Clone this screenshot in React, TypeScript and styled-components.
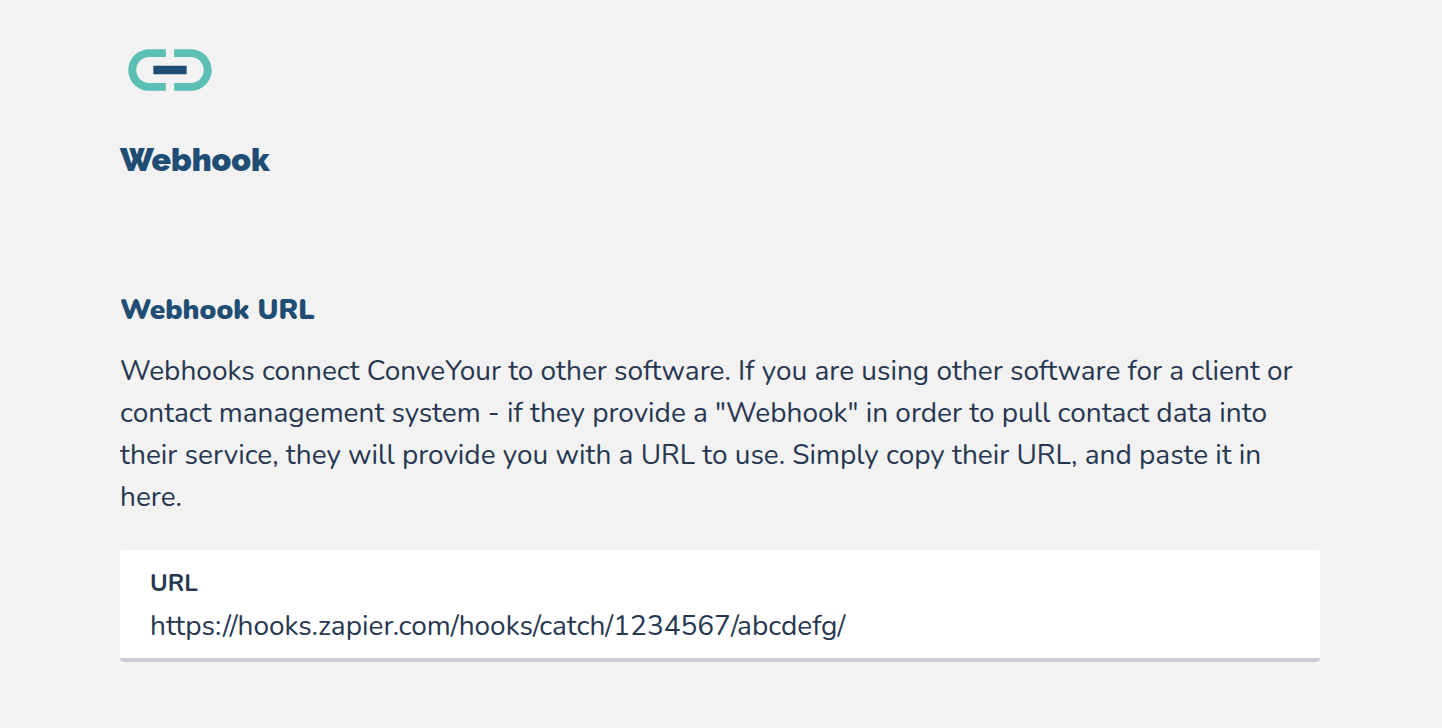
import React from "react";
import styled, { createGlobalStyle } from "styled-components";

const GlobalStyle = createGlobalStyle`
  *, *::before, *::after { box-sizing: border-box; }
  body {
    margin: 0;
    background: #f2f2f2;
    color: #273751;
    font-family: Nunito, Lato, "Open Sans", sans-serif;
    -webkit-font-smoothing: antialiased;
  }
`;

const Page = styled.main`
  padding: 20px 122px 66px 120px;
`;

const Logo = styled.svg`
  display: block;
  width: 100px;
  height: 100px;
`;

const Title = styled.h1`
  margin: 16px 0 0;
  color: #1f4d73;
  font-family: Raleway, Lato, sans-serif;
  font-size: 32px;
  font-weight: 900;
  line-height: 48px;
`;

const Section = styled.section`
  margin-top: 104px;
`;

const SectionTitle = styled.h2`
  margin: 0;
  color: #1f4d73;
  font-size: 28px;
  font-weight: 900;
  line-height: 44px;
`;

const Description = styled.p`
  margin: 18px 0 0;
  font-size: 28px;
  line-height: 42px;
`;

const Field = styled.label`
  display: block;
  margin-top: 32px;
  padding: 18px 30px 8px;
  background: #fff;
  border-bottom: 4px solid #c9cdd3;
  border-radius: 4px;
`;

const FieldLabel = styled.span`
  display: block;
  font-size: 24px;
  font-weight: 700;
  line-height: 30px;
`;

const FieldInput = styled.input`
  display: block;
  width: 100%;
  height: 48px;
  margin: 4px 0 0;
  padding: 0;
  border: 0;
  outline: 0;
  background: transparent;
  color: inherit;
  font: inherit;
  font-size: 28px;
`;

export default function App() {
  return (
    <>
      <GlobalStyle />
      <Page>
        <Logo viewBox="0 0 24 24" aria-hidden="true">
          <path
            fill="#5bbfb3"
            d="M3.9 12c0-1.71 1.39-3.1 3.1-3.1h4V7H7c-2.76 0-5 2.24-5 5s2.24 5 5 5h4v-1.9H7c-1.71 0-3.1-1.39-3.1-3.1zM17 7h-4v1.9h4c1.71 0 3.1 1.39 3.1 3.1s-1.39 3.1-3.1 3.1h-4V17h4c2.76 0 5-2.24 5-5s-2.24-5-5-5z"
          />
          <path fill="#1f4d73" d="M8 11h8v2H8z" />
        </Logo>
        <Title>Webhook</Title>
        <Section>
          <SectionTitle>Webhook URL</SectionTitle>
          <Description>
            Webhooks connect ConveYour to other software. If you are using other software for a
            client or contact management system - if they provide a "Webhook" in order to pull
            contact data into their service, they will provide you with a URL to use. Simply copy
            their URL, and paste it in here.
          </Description>
          <Field>
            <FieldLabel>URL</FieldLabel>
            <FieldInput type="url" defaultValue="https://hooks.zapier.com/hooks/catch/1234567/abcdefg/" />
          </Field>
        </Section>
      </Page>
    </>
  );
}
